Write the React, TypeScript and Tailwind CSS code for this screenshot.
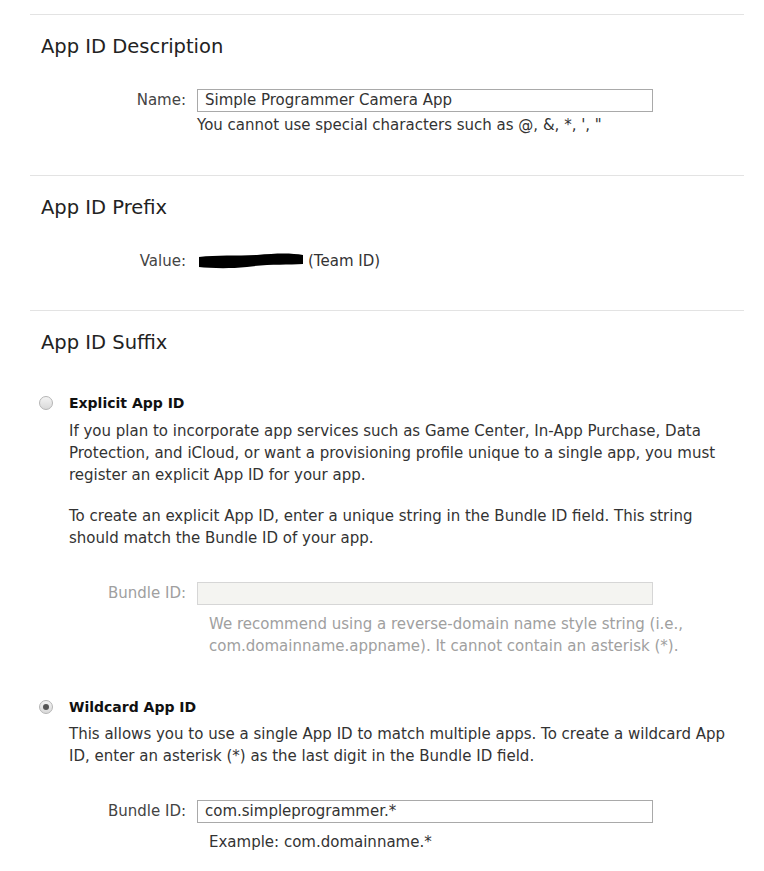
import React from 'react';

const font = { fontFamily: '"DejaVu Sans", "Noto Sans", sans-serif' };

function Section({ title, children, last }: { title: string; children: React.ReactNode; last?: boolean }) {
  return (
    <section className={last ? 'pt-[18px]' : 'border-b border-[#e3e3e3] pt-[18px]'}>
      <h2 className="pl-[11px] text-[19.5px] leading-[28px] text-[#222]">{title}</h2>
      {children}
    </section>
  );
}

function Field({ label, value, disabled }: { label: string; value: string; disabled?: boolean }) {
  return (
    <div className="flex items-center">
      <label className={`w-[167px] pr-[11px] text-right text-[15px] ${disabled ? 'text-[#a0a0a0]' : 'text-[#444]'}`}>{label}</label>
      <div
        className={`flex h-[23px] w-[456px] items-center border px-[7px] text-[15px] text-[#333] ${
          disabled ? 'border-[#d6d6d6] bg-[#f4f4f1]' : 'border-[#a9a9a9] bg-white'
        }`}
      >
        {value}
      </div>
    </div>
  );
}

function Radio({ checked }: { checked?: boolean }) {
  return (
    <span className="flex h-[14px] w-[14px] items-center justify-center rounded-full border border-[#b5b5b5] bg-gradient-to-b from-[#f4f4f4] to-[#d9d9d9]">
      {checked ? <span className="h-[6px] w-[6px] rounded-full bg-[#555]" /> : null}
    </span>
  );
}

export default function App() {
  return (
    <div className="min-h-[871px] w-[764px] bg-white pt-[14px]" style={font}>
      <div className="ml-[30px] w-[714px]">
        <div className="border-t border-[#e3e3e3]" />

        <Section title="App ID Description">
          <div className="pb-[39px] pt-[28px]">
            <Field label="Name:" value="Simple Programmer Camera App" />
            <p className="ml-[167px] mt-[2px] text-[15px] leading-[22px] text-[#333]">You cannot use special characters such as @, &amp;, *, &apos;, &quot;</p>
          </div>
        </Section>

        <Section title="App ID Prefix">
          <div className="flex items-center pb-[37px] pt-[28px]">
            <span className="w-[167px] pr-[11px] text-right text-[15px] text-[#444]">Value:</span>
            <svg width="108" height="18" viewBox="0 0 108 18" className="mr-[3px]">
              <path d="M2 5 C20 3 40 4 60 3 C80 1 95 1 106 3 L106 12 C90 13 70 12 50 15 C30 17 12 16 2 15 Z" fill="#000" />
            </svg>
            <span className="text-[15px] text-[#333]">(Team ID)</span>
          </div>
        </Section>

        <Section title="App ID Suffix" last>
          <div className="pt-[36px] pb-[30px]">
            <div className="flex items-center">
              <div className="flex w-[39px] justify-start pl-[9px]">
                <Radio />
              </div>
              <span className="text-[14px] font-bold text-[#111]">Explicit App ID</span>
            </div>
            <div className="ml-[39px] mt-[6px] w-[662px] text-[15px] leading-[22px] text-[#333]">
              <p>
                If you plan to incorporate app services such as Game Center, In-App Purchase, Data Protection, and iCloud, or want a provisioning profile unique to a single app, you must register an explicit App ID for your app.
              </p>
              <p className="mt-[19px]">
                To create an explicit App ID, enter a unique string in the Bundle ID field. This string should match the Bundle ID of your app.
              </p>
            </div>
            <div className="mt-[33px]">
              <Field label="Bundle ID:" value="" disabled />
              <p className="ml-[179px] mt-[8px] text-[15px] leading-[22px] text-[#a0a0a0]">
                We recommend using a reverse-domain name style string (i.e., com.domainname.appname). It cannot contain an asterisk (*).
              </p>
            </div>

            <div className="mt-[40px] flex items-center">
              <div className="flex w-[39px] justify-start pl-[9px]">
                <Radio checked />
              </div>
              <span className="text-[14px] font-bold text-[#111]">Wildcard App ID</span>
            </div>
            <div className="ml-[39px] mt-[5px] w-[662px] text-[15px] leading-[22px] text-[#333]">
              <p>
                This allows you to use a single App ID to match multiple apps. To create a wildcard App ID, enter an asterisk (*) as the last digit in the Bundle ID field.
              </p>
            </div>
            <div className="mt-[33px]">
              <Field label="Bundle ID:" value="com.simpleprogrammer.*" />
              <p className="ml-[179px] mt-[8px] text-[15px] leading-[22px] text-[#333]">Example: com.domainname.*</p>
            </div>
          </div>
        </Section>
      </div>
    </div>
  );
}
